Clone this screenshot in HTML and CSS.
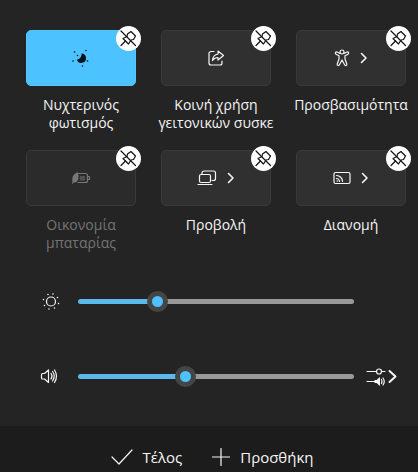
FILE: index.html
```html
<!DOCTYPE html>
<html lang="el">
<head>
  <meta charset="UTF-8" />
  <meta name="viewport" content="width=device-width, initial-scale=1.0" />
  <title>Γρήγορες ρυθμίσεις</title>
  <link rel="stylesheet" href="styles.css">
</head>
<body>
  <!-- Shared icon shapes -->
  <svg class="sprite" aria-hidden="true">
    <symbol id="unpin" viewBox="0 0 25 25">
      <path d="M15 5.500l4.500 4.500-2 3.500-2.500.5-2.500 4-5.500-5.500 4-2 .5-2.500z" />
      <path d="M9.500 15l-4.500 4.500M5 5l14.500 14.500" />
    </symbol>
    <symbol id="chevron" viewBox="0 0 8 12">
      <path d="M1.500 1.500L6 6l-4.500 4.500" />
    </symbol>
  </svg>

  <main class="panel">
    <div class="tiles">
      <div class="tile">
        <button class="toggle on" aria-labelledby="night">
          <svg class="moon" width="18" height="18" viewBox="0 0 18 18">
            <path d="M9.500 4.500A4.700 4.700 0 1 1 4.800 10.500C7.500 10.500 9.800 8 9.500 4.500z" />
            <circle cx="2.500" cy="3" r=".8" />
            <circle cx="5.500" cy="6.500" r=".8" />
            <circle cx="14" cy="1.500" r=".8" />
            <circle cx="1" cy="12" r=".8" />
            <circle cx="15.500" cy="12" r=".8" />
            <circle cx="10.500" cy="17" r=".8" />
          </svg>
        </button>
        <button class="unpin" aria-label="Ξεκαρφίτσωμα"><svg><use href="#unpin" /></svg></button>
        <span class="label" id="night">Νυχτερινός<br>φωτισμός</span>
      </div>

      <div class="tile">
        <button class="toggle" aria-labelledby="share">
          <svg width="18" height="18" viewBox="0 0 18 18">
            <path d="M7 2.500H4A2 2 0 0 0 2 4.500v9.500a2 2 0 0 0 2 2h9a2 2 0 0 0 2-2v-2" />
            <path d="M11 2l5.500 4.500L11 11V8.500c-2.500 0-4 .8-5.500 3 .3-3.500 2.200-6 5.500-6.500z" />
          </svg>
        </button>
        <button class="unpin" aria-label="Ξεκαρφίτσωμα"><svg><use href="#unpin" /></svg></button>
        <span class="label" id="share">Κοινή χρήση<br>γειτονικών συσκε</span>
      </div>

      <div class="tile">
        <button class="toggle" aria-labelledby="access">
          <svg width="16" height="18" viewBox="0 0 16 18">
            <circle cx="8" cy="3" r="2" />
            <path d="M6 4.500L3 3C1.500 2.500.7 4.500 2 5.200l3 1.600v3.200l-1.800 5c-.4 1.500 1.500 2.200 2.200.8L8 11l2.600 4.800c.7 1.400 2.600.7 2.200-.8L11 10V6.800l3-1.600c1.300-.7.5-2.700-1-2.200l-3 1.500" />
          </svg>
          <svg class="chevron"><use href="#chevron" /></svg>
        </button>
        <button class="unpin" aria-label="Ξεκαρφίτσωμα"><svg><use href="#unpin" /></svg></button>
        <span class="label" id="access">Προσβασιμότητα</span>
      </div>

      <div class="tile off">
        <button class="toggle" aria-labelledby="saver" disabled>
          <svg width="20" height="14" viewBox="0 0 20 14">
            <path d="M8 2.500h6.500a2 2 0 0 1 2 2v5a2 2 0 0 1-2 2H7M17 5.500h1.500v3H17" />
            <path class="solid" d="M9 5h5v4.500H8.500z" opacity=".5" />
            <path class="solid" d="M7 1C3 3 .5 5.500 1.500 10L1 13l2-1.500c4 .2 5.500-4 4-10.500z" />
          </svg>
        </button>
        <button class="unpin" aria-label="Ξεκαρφίτσωμα"><svg><use href="#unpin" /></svg></button>
        <span class="label" id="saver">Οικονομία<br>μπαταρίας</span>
      </div>

      <div class="tile">
        <button class="toggle" aria-labelledby="project">
          <svg width="20" height="16" viewBox="0 0 20 16">
            <path d="M5 4V3a2 2 0 0 1 2-2h9.500a2 2 0 0 1 2 2v5.500a2 2 0 0 1-2 2H15" />
            <rect x="2.500" y="4.500" width="11" height="8" rx="1.500" />
            <path d="M1 14.500h14" />
          </svg>
          <svg class="chevron"><use href="#chevron" /></svg>
        </button>
        <button class="unpin" aria-label="Ξεκαρφίτσωμα"><svg><use href="#unpin" /></svg></button>
        <span class="label" id="project">Προβολή</span>
      </div>

      <div class="tile">
        <button class="toggle" aria-labelledby="cast">
          <svg width="18" height="14" viewBox="0 0 18 14">
            <rect x="1" y="1.500" width="16" height="11" rx="1.500" />
            <path d="M3.500 4.500a6 6 0 0 1 6 6M3.500 7.500a3 3 0 0 1 3 3" />
            <circle class="solid" cx="4.200" cy="10" r=".8" />
          </svg>
          <svg class="chevron"><use href="#chevron" /></svg>
        </button>
        <button class="unpin" aria-label="Ξεκαρφίτσωμα"><svg><use href="#unpin" /></svg></button>
        <span class="label" id="cast">Διανομή</span>
      </div>
    </div>

    <div class="sliders">
      <div class="row">
        <label for="brightness" aria-label="Φωτεινότητα">
          <svg width="24" height="24" viewBox="0 0 24 24">
            <circle cx="12" cy="12.500" r="4.500" />
            <path class="rays" d="M9 5.500v.01M14 5v.01M18.500 8.500v.01M19.500 14.500v.01M15.500 19v.01M10 20v.01M5.500 16.500v.01M4.500 10.500v.01" />
          </svg>
        </label>
        <input type="range" id="brightness" min="0" max="100" value="27" style="--value: 27%">
      </div>
      <div class="row">
        <label for="volume" aria-label="Ένταση ήχου">
          <svg width="24" height="24" viewBox="0 0 24 24">
            <path d="M9.500 6v12.500L5.500 15H3.500a1 1 0 0 1-1-1v-3.500a1 1 0 0 1 1-1h2z" />
            <path d="M12 9.500q2 2.700 0 5.500M13.500 7.500q3.500 4.700 0 9.500M15.500 6q4 6.200 0 12.500" />
          </svg>
        </label>
        <input type="range" id="volume" min="0" max="100" value="38" style="--value: 38%">
        <button class="mixer" aria-label="Μίκτης ήχου">
          <svg width="32" height="24" viewBox="0 0 32 24">
            <path d="M1 7.500h9.500M15.500 7.500H19M1 17.500h8" />
            <circle cx="13" cy="7.500" r="2.500" />
            <path class="solid" d="M8.500 16h2l3.500-3v9l-3.500-3h-2z" />
            <path d="M15.500 15.500q1 2 0 4M17 14q2.500 3.500 0 7" />
            <path class="arrow" d="M23.500 7l6 5.500-6 5.500" />
          </svg>
        </button>
      </div>
    </div>
  </main>

  <footer class="footer">
    <button>
      <svg width="22" height="18" viewBox="0 0 22 18"><path d="M1 9l7 7L21 2" /></svg>
      Τέλος
    </button>
    <button>
      <svg width="18" height="18" viewBox="0 0 18 18"><path d="M9 .5v17M.5 9h17" /></svg>
      Προσθήκη
    </button>
  </footer>

  <script>
    // Keep the coloured part of each track in step with its thumb
    document.querySelectorAll("input[type=range]").forEach(function (slider) {
      slider.addEventListener("input", function () {
        slider.style.setProperty("--value", slider.value + "%");
      });
    });
  </script>
</body>
</html>
```

FILE: styles.css
```css
* {
  box-sizing: border-box;
}
body {
  margin: 0;
  min-height: 100vh;
  display: flex;
  flex-direction: column;
  background-color: #242424;
  color: #f5f5f5;
  font-family: "Open Sans", "Noto Sans", sans-serif;
  font-size: 14px;
  line-height: 18px;
}
button {
  padding: 0;
  border: none;
  background: none;
  color: inherit;
  font: inherit;
  cursor: pointer;
}
svg {
  display: block;
  flex: none;
  fill: none;
  stroke: currentColor;
  stroke-width: 1.2;
  stroke-linecap: round;
  stroke-linejoin: round;
}
.solid {
  fill: currentColor;
  stroke: none;
}
.sprite {
  display: none;
}
.panel {
  flex: 1;
  padding: 30px 0 38px;
}

/* Quick setting tiles */
.tiles {
  display: grid;
  grid-template-columns: repeat(3, minmax(0, 1fr));
  gap: 18px 25px;
  padding: 0 12px 0 26px;
}
.tile {
  position: relative;
}
.toggle {
  display: flex;
  align-items: center;
  justify-content: center;
  gap: 10px;
  width: 100%;
  height: 56px;
  border: 1px solid #3a3a3a;
  border-radius: 5px;
  background-color: #303030;
}
.toggle.on {
  border-color: #58c4fc;
  background-color: #4cc2ff;
  color: #06121c;
}
.moon {
  fill: currentColor;
  stroke: none;
}
.chevron {
  width: 8px;
  height: 12px;
  stroke-width: 1.6;
}
.unpin {
  position: absolute;
  top: -4px;
  right: -5px;
  width: 25px;
  height: 25px;
  border-radius: 50%;
  background-color: #fff;
  color: #111;
}
.unpin svg {
  width: 25px;
  height: 25px;
}
.label {
  display: block;
  margin: 10px -4px 0;
  text-align: center;
  white-space: nowrap;
}
.off .toggle {
  background-color: #2b2b2b;
  color: #777;
}
.off .label {
  color: #747474;
}

/* Brightness and volume */
.sliders {
  display: grid;
  gap: 51px;
  padding: 37px 20px 0 39px;
}
.row {
  display: grid;
  grid-template-columns: 24px 1fr 32px;
  align-items: center;
  height: 24px;
}
.rays {
  stroke-width: 1.6;
}
.mixer .arrow {
  stroke-width: 2;
}
input[type="range"] {
  -webkit-appearance: none;
  appearance: none;
  width: auto;
  height: 5px;
  margin: 0 12px 0 15px;
  border-radius: 3px;
  background: linear-gradient(to right, #5cb8ec var(--value), #999 var(--value));
}
input[type="range"]::-webkit-slider-thumb {
  -webkit-appearance: none;
  width: 21px;
  height: 21px;
  border: 5px solid #454545;
  border-radius: 50%;
  background-color: #4cc2ff;
}

/* Bottom bar */
.footer {
  display: flex;
  justify-content: center;
  gap: 30px;
  padding: 20px 0 4px 6px;
  background-color: #1c1c1c;
  font-size: 15px;
  line-height: 22px;
}
.footer button {
  display: flex;
  align-items: center;
  gap: 10px;
}
```
